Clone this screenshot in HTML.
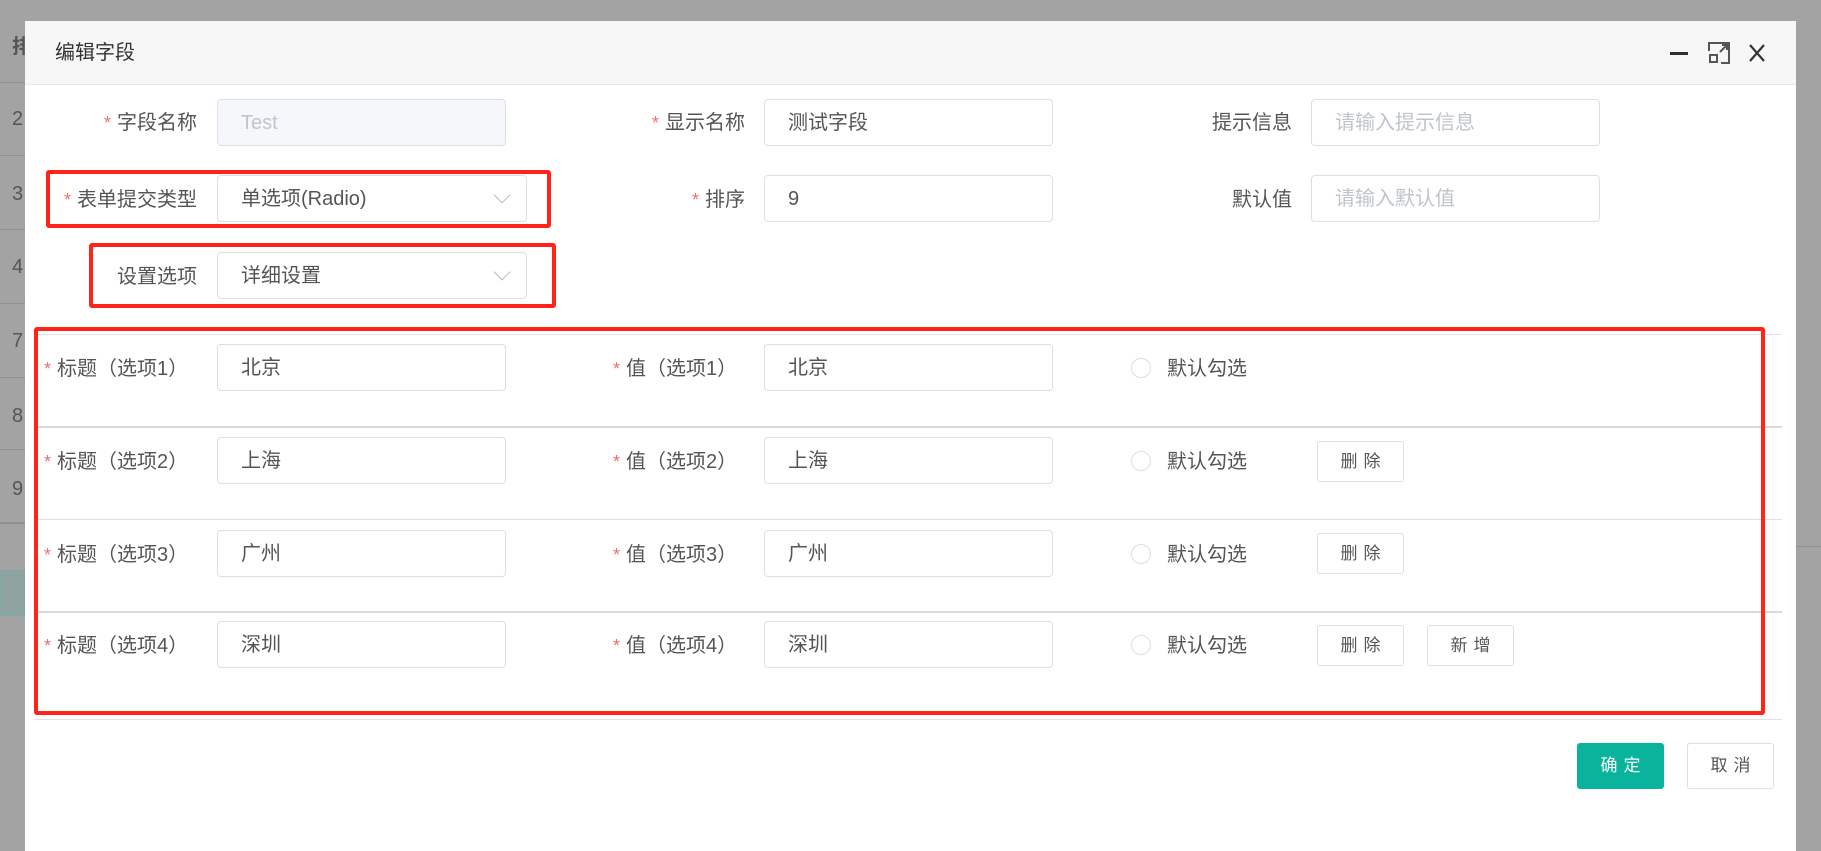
<!DOCTYPE html>
<html><head><meta charset="utf-8">
<style>
*{box-sizing:border-box;margin:0;padding:0}
body{width:1821px;height:834px;overflow:hidden;background:#a3a3a3;font-family:"Liberation Sans","Noto Sans CJK SC",sans-serif;position:relative;color:#555}
.a{position:absolute}
.bgnum{position:absolute;left:12px;font-size:20px;color:#555}
.bgline{position:absolute;left:0;width:25px;height:1px;background:#8f8f9a}
.dlg{position:absolute;left:25px;top:21px;width:1771px;height:830px;background:#fff}
.hdr{position:absolute;left:0;top:0;width:100%;height:64px;background:#f7f7f7;border-bottom:1px solid #e8e8e8}
.lbl{position:absolute;font-size:20px;color:#555;white-space:nowrap;line-height:26px}
.lbl .s{color:#f56c6c;margin-right:6px;font-size:18px}
.inp{position:absolute;height:47px;border:1px solid #dcdfe6;border-radius:4px;font-size:20px;color:#555;padding-left:23px;line-height:47px;background:#fff}
.ph{color:#c0c4cc}
.dis{background:#f5f7fa;color:#c0c4cc}
.chev{position:absolute;right:18px;top:13px;width:12px;height:12px;border-right:1px solid #b8bcc4;border-bottom:1px solid #b8bcc4;transform:rotate(45deg)}
.red{position:absolute;border:4px solid #ff2318;border-radius:3px}
.sep{position:absolute;left:10px;width:1747px;height:1px;background:#e0e0e6}
.radio{position:absolute;width:20px;height:20px;border:1px solid #dcdfe6;border-radius:50%}
.btn{position:absolute;width:87px;height:41px;border:1px solid #dcdfe6;border-radius:3px;font-size:17px;color:#555;text-align:center;line-height:39px;letter-spacing:6px;background:#fff;padding-left:6px}
</style></head><body>
<div class="bgnum" style="top:30px;font-weight:bold">排</div>
<div class="bgline" style="top:82px"></div>
<div class="bgnum" style="top:108px">2</div>
<div class="bgline" style="top:155px"></div>
<div class="bgnum" style="top:183px">3</div>
<div class="bgline" style="top:229px"></div>
<div class="bgnum" style="top:256px">4</div>
<div class="bgline" style="top:303px"></div>
<div class="bgnum" style="top:330px">7</div>
<div class="bgline" style="top:377px"></div>
<div class="bgnum" style="top:405px">8</div>
<div class="bgline" style="top:449px"></div>
<div class="bgnum" style="top:478px">9</div>
<div class="bgline" style="top:522px;height:2px"></div>
<div class="a" style="left:0;top:570px;width:25px;height:46px;background:#8fa49f;border:1px solid #7aa"></div>
<div class="bgline" style="top:546px;left:1796px"></div>

<div class="dlg">
 <div class="hdr">
  <div class="lbl" style="left:30px;top:19px;font-size:20px;color:#333">编辑字段</div>
  <div class="a" style="left:1645px;top:31px;width:18px;height:3px;background:#2d2d3a"></div>
  <svg class="a" style="left:1683px;top:21px" width="22" height="22" viewBox="0 0 22 22" fill="none" stroke="#555" stroke-width="2"><path d="M1 9V1h20v20h-8"/><path d="M12 10l7-7M14 3h5v5"/><rect x="2" y="13" width="7" height="7"/></svg>
  <svg class="a" style="left:1723px;top:22px" width="18" height="20" viewBox="0 0 18 20" fill="none" stroke="#333" stroke-width="2.2"><path d="M2 2l14 16M16 2L2 18"/></svg>
 </div>

 <!-- row 1 -->
 <div class="lbl" style="right:1599px;top:89px"><span class="s">*</span>字段名称</div>
 <div class="inp dis" style="left:192px;top:78px;width:289px">Test</div>
 <div class="lbl" style="right:1051px;top:89px"><span class="s">*</span>显示名称</div>
 <div class="inp" style="left:739px;top:78px;width:289px">测试字段</div>
 <div class="lbl" style="right:504px;top:89px">提示信息</div>
 <div class="inp ph" style="left:1286px;top:78px;width:289px">请输入提示信息</div>
 <!-- row 2 -->
 <div class="lbl" style="right:1599px;top:166px"><span class="s">*</span>表单提交类型</div>
 <div class="inp" style="left:192px;top:154px;width:310px">单选项(Radio)<div class="chev"></div></div>
 <div class="lbl" style="right:1051px;top:166px"><span class="s">*</span>排序</div>
 <div class="inp" style="left:739px;top:154px;width:289px">9</div>
 <div class="lbl" style="right:504px;top:166px">默认值</div>
 <div class="inp ph" style="left:1286px;top:154px;width:289px">请输入默认值</div>
 <!-- row 3 -->
 <div class="lbl" style="right:1599px;top:243px">设置选项</div>
 <div class="inp" style="left:192px;top:231px;width:310px">详细设置<div class="chev"></div></div>

 <div class="red" style="left:21px;top:149px;width:505px;height:58px"></div>
 <div class="red" style="left:64px;top:222px;width:467px;height:65px"></div>

 <div class="sep" style="top:313px"></div>
 <div class="sep" style="top:405px;height:2px;background:#d9d9e0"></div>
 <div class="sep" style="top:498px"></div>
 <div class="sep" style="top:590px;height:2px;background:#d9d9e0"></div>
 <div class="sep" style="top:698px"></div>

 <!-- option rows -->
 <div class="lbl" style="left:19px;top:335px"><span class="s">*</span>标题（选项1）</div>
 <div class="inp" style="left:192px;top:323px;width:289px">北京</div>
 <div class="lbl" style="left:588px;top:335px"><span class="s">*</span>值（选项1）</div>
 <div class="inp" style="left:739px;top:323px;width:289px">北京</div>
 <div class="radio" style="left:1106px;top:337px"></div>
 <div class="lbl" style="left:1142px;top:335px">默认勾选</div>

 <div class="lbl" style="left:19px;top:428px"><span class="s">*</span>标题（选项2）</div>
 <div class="inp" style="left:192px;top:416px;width:289px">上海</div>
 <div class="lbl" style="left:588px;top:428px"><span class="s">*</span>值（选项2）</div>
 <div class="inp" style="left:739px;top:416px;width:289px">上海</div>
 <div class="radio" style="left:1106px;top:430px"></div>
 <div class="lbl" style="left:1142px;top:428px">默认勾选</div>
 <div class="btn" style="left:1292px;top:420px">删除</div>

 <div class="lbl" style="left:19px;top:521px"><span class="s">*</span>标题（选项3）</div>
 <div class="inp" style="left:192px;top:509px;width:289px">广州</div>
 <div class="lbl" style="left:588px;top:521px"><span class="s">*</span>值（选项3）</div>
 <div class="inp" style="left:739px;top:509px;width:289px">广州</div>
 <div class="radio" style="left:1106px;top:523px"></div>
 <div class="lbl" style="left:1142px;top:521px">默认勾选</div>
 <div class="btn" style="left:1292px;top:512px">删除</div>

 <div class="lbl" style="left:19px;top:612px"><span class="s">*</span>标题（选项4）</div>
 <div class="inp" style="left:192px;top:600px;width:289px">深圳</div>
 <div class="lbl" style="left:588px;top:612px"><span class="s">*</span>值（选项4）</div>
 <div class="inp" style="left:739px;top:600px;width:289px">深圳</div>
 <div class="radio" style="left:1106px;top:614px"></div>
 <div class="lbl" style="left:1142px;top:612px">默认勾选</div>
 <div class="btn" style="left:1292px;top:604px">删除</div>
 <div class="btn" style="left:1402px;top:604px">新增</div>

 <div class="red" style="left:9px;top:306px;width:1731px;height:388px"></div>

 <div class="btn" style="left:1552px;top:722px;background:#0ab39b;border-color:#0ab39b;color:#fff;height:46px;line-height:44px">确定</div>
 <div class="btn" style="left:1662px;top:722px;height:46px;line-height:44px">取消</div>
</div>
</body></html>
